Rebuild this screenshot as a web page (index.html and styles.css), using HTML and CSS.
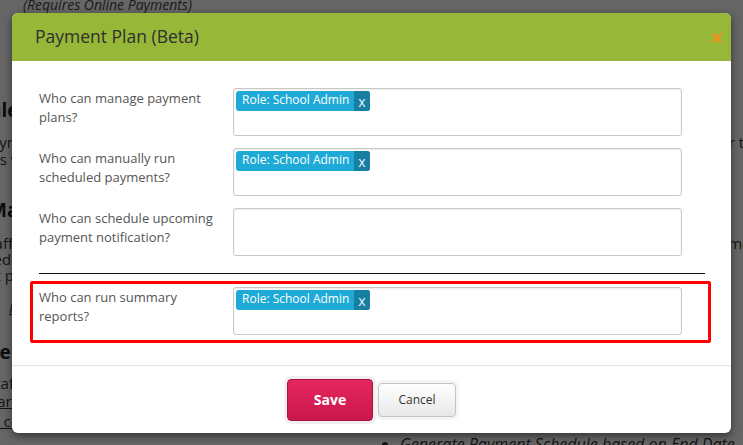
FILE: index.html
```html
<!DOCTYPE html>
<html>
<head>
<meta charset="utf-8">
<link rel="stylesheet" href="styles.css">
</head>
<body>
<div class="page">
  <p class="note">(Requires Online Payments)</p>
  <h3 class="h h1">Schedule Payments</h3>
  <p class="line l1">Payments are automatically charged to the stored payment method for each installment as it comes due for the fam</p>
  <p class="line ind">Installments will be processed on the due date.</p>
  <h3 class="h h2">Manage Payment Plans</h3>
  <p class="line l2">Staff with this permission can edit payment plans for families and update the schedules, edit upcoming payments, enroll records</p>
  <p class="line ind2">schedule changes as needed.</p>
  <p class="line ind3">payment plan changes are recorded.</p>
  <p class="line link"><a>Installments Help</a></p>
  <h3 class="h h3">Reporting</h3>
  <p class="line l3">Staff of a school can view reports</p>
  <p class="line ind4"><a>Summary reports</a></p>
  <p class="line ind5"><a>Account contacts</a></p>
  <ul class="bullets"><li>Generate Payment Schedule based on End Date</li></ul>
</div>
<div class="overlay"></div>
<div class="modal">
  <div class="modal-header">
    <h2 class="modal-title">Payment Plan (Beta)</h2>
    <span class="close"><svg width="10" height="10" viewBox="0 0 10 10"><path d="M1.5 1.5 L8.5 8.5 M8.5 1.5 L1.5 8.5" stroke="#f0921e" stroke-width="2.6" stroke-linecap="square"/></svg></span>
  </div>
  <div class="modal-body">
    <div class="row">
      <label class="lbl">Who can manage payment plans?</label>
      <div class="field"><span class="tag"><span class="tag-text">Role: School Admin</span><span class="tag-x">x</span></span></div>
    </div>
    <div class="row">
      <label class="lbl">Who can manually run scheduled payments?</label>
      <div class="field"><span class="tag"><span class="tag-text">Role: School Admin</span><span class="tag-x">x</span></span></div>
    </div>
    <div class="row">
      <label class="lbl">Who can schedule upcoming payment notification?</label>
      <div class="field"></div>
    </div>
    <hr class="sep">
    <div class="row highlight">
      <label class="lbl">Who can run summary reports?</label>
      <div class="field"><span class="tag"><span class="tag-text">Role: School Admin</span><span class="tag-x">x</span></span></div>
    </div>
  </div>
  <div class="modal-footer">
    <button class="btn btn-save">Save</button>
    <button class="btn btn-cancel">Cancel</button>
  </div>
</div>
</body>
</html>
```
FILE: styles.css
```css
html, body { margin: 0; padding: 0; }
body {
  width: 743px;
  height: 445px;
  overflow: hidden;
  background: #fff;
  font-family: "Open Sans", "Liberation Sans", sans-serif;
  color: #333;
  position: relative;
}
.page {
  width: 743px;
  height: 445px;
  overflow: hidden;
}
.page p, .page h3 { margin: 0; white-space: nowrap; }
.note {
  font-style: italic;
  font-size: 14px;
  color: #444;
  margin-left: 23px !important;
  margin-top: -4px !important;
  line-height: 18px;
}
.h { font-size: 19px; font-weight: bold; color: #222; line-height: 22px; }
.h1 { margin-top: 85px !important; margin-left: -67px !important; }
.h2 { margin-top: 32px !important; margin-left: -11px !important; }
.h3 { margin-top: 26px !important; margin-left: -13px !important; }
.line { font-size: 15px; line-height: 16px; color: #333; }
.l1 { margin-top: 13px !important; margin-left: -18px !important; }
.ind { margin-left: -79px !important; margin-top: 1px !important; }
.l2 { margin-top: 14px !important; margin-left: -19px !important; }
.ind2 { margin-left: -30px !important; }
.ind3 { margin-left: -61px !important; }
.link { margin-top: 16px !important; font-style: italic; margin-left: 9px !important; }
.l3 { margin-top: 12px !important; margin-left: -13px !important; }
.ind4 { margin-left: -48px !important; margin-top: 2px !important; }
.ind5 { margin-left: -57px !important; margin-top: 4px !important; }
.page a { text-decoration: underline; color: #333; }
.bullets { margin: 5px 0 0 400px; padding: 0; font-style: italic; font-size: 16px; line-height: 20px; }
.overlay {
  position: absolute;
  inset: 0;
  background: rgba(0, 0, 0, 0.6);
}
.modal {
  position: absolute;
  left: 12px;
  top: 13px;
  width: 719px;
  height: 420px;
  background: #fff;
  border-radius: 6px;
  box-shadow: 0 3px 9px rgba(0, 0, 0, 0.5);
  display: flex;
  flex-direction: column;
  overflow: hidden;
}
.modal-header {
  height: 48px;
  background: #97b738;
  display: flex;
  align-items: center;
  justify-content: space-between;
  padding: 0 9px 0 23px;
  flex-shrink: 0;
}
.modal-title {
  margin: 0;
  font-size: 17.5px;
  font-weight: normal;
  color: #2f2f2f;
  position: relative;
  top: -1px;
}
.close { display: flex; width: 10px; height: 10px; margin-top: 2px; }
.modal-body {
  padding: 27px 26px 0 27px;
  height: 304px;
  box-sizing: border-box;
  flex-shrink: 0;
}
.row {
  display: flex;
  align-items: flex-start;
  margin-bottom: 12px;
}
.lbl {
  width: 194px;
  font-size: 13px;
  line-height: 19px;
  color: #555;
  padding-top: 1px;
  padding-right: 20px;
  box-sizing: border-box;
}
.field {
  width: 449px;
  height: 48px;
  box-sizing: border-box;
  border: 1px solid #c8c8c8;
  border-radius: 3px;
  box-shadow: inset 0 1px 2px rgba(0, 0, 0, 0.08);
  padding: 2px;
  display: flex;
  align-items: flex-start;
}
.tag {
  display: inline-flex;
  height: 20px;
  background: #1eaad6;
  border-radius: 3px;
  overflow: hidden;
  color: #fff;
  font-size: 12px;
  line-height: 18px;
}
.tag-text { padding: 0 5px 0 6px; width: 118px; box-sizing: border-box; white-space: nowrap; }
.tag-x {
  width: 16px;
  text-align: center;
  background: #177fa2;
  color: #e8f4f8;
  font-size: 14px;
  line-height: 21px;
}
.sep {
  border: 0;
  border-top: 1px solid #111;
  margin: 17px 0 7px 0;
  height: 0;
}
.highlight {
  border: 3px solid #ff0000;
  border-radius: 2px;
  margin: 0 -6px 0 -9px;
  padding: 3px 0 5px 6px;
}
.modal-footer {
  flex: 1;
  border-top: 1px solid #e5e5e5;
  display: flex;
  align-items: center;
  justify-content: center;
  gap: 5px;
}
.btn {
  font-family: "Open Sans", "Liberation Sans", sans-serif;
  border-radius: 4px;
  cursor: pointer;
}
.btn-save {
  width: 86px;
  height: 42px;
  background: linear-gradient(#e6275f, #c8174c);
  border: 1px solid #a8143f;
  color: #fff;
  font-weight: bold;
  font-size: 14px;
  box-shadow: 0 0 0 3px #f0f0f0;
}
.btn-cancel {
  width: 78px;
  height: 34px;
  background: linear-gradient(#ffffff, #e8e8e8);
  border: 1px solid #c4c4c4;
  color: #333;
  font-size: 12px;
  box-shadow: 0 0 0 3px #f5f5f5;
}
```
